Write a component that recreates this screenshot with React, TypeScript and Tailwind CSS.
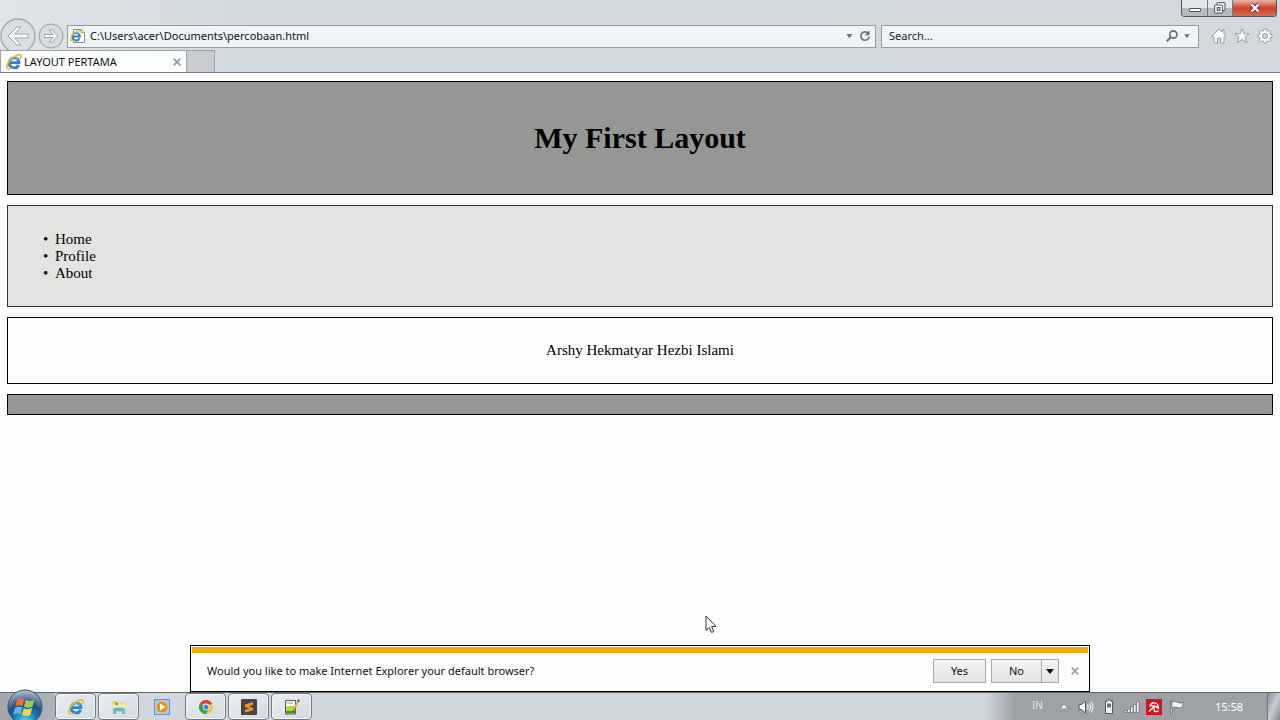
import type { ReactNode } from "react"

const menu = ["Home", "Profile", "About"]

function IeLogo({ className }: { className: string }) {
  return (
    <svg viewBox="0 0 16 16" className={className} fill="none" aria-hidden="true">
      <path d="M3.4 8.700h9.600A4.800 4.800 0 0 0 3.400 8.500 4.800 4.800 0 0 0 12.600 10.900" stroke="#2a86c9" strokeWidth="2.800" />
      <path d="M3.400 8.200A4.800 4.800 0 0 1 12 5.600" stroke="#62bdec" strokeWidth="1.400" />
      <path d="M2.600 15C-.6 14 .8 9.200 5 5.200 9 1.300 13.700-.3 14.900 1.500c.6 1 .2 2.200-.5 3.300" stroke="#edb920" strokeWidth="1.600" />
      <path d="M2.600 15c1.200.3 2.700-.3 4-1.200" stroke="#edb920" strokeWidth="1.300" />
    </svg>
  )
}

function PageIcon() {
  return (
    <span className="relative block h-4 w-4 shrink-0">
      <svg viewBox="0 0 16 16" className="h-4 w-4" aria-hidden="true">
        <path d="M3.500 1.500h8l3 3v10h-11z" fill="#fff" stroke="#8b8f96" />
        <path d="M11.500 1.500v3h3" fill="#f7dfc4" stroke="#b58f78" />
      </svg>
      <IeLogo className="absolute top-[2px] left-0 h-3 w-3" />
    </span>
  )
}

function CaretDown({ className }: { className: string }) {
  return (
    <svg viewBox="0 0 8 5" className={className} fill="currentColor" aria-hidden="true">
      <path d="M0 0h8L4 5z" />
    </svg>
  )
}

function Cross({ className }: { className: string }) {
  return (
    <svg viewBox="0 0 8 8" className={className} stroke="currentColor" strokeWidth="1.800" aria-hidden="true">
      <path d="M.7.7l6.600 6.600M7.300.7L.7 7.300" />
    </svg>
  )
}

function WindowControls() {
  return (
    <div className="flex h-[17px] overflow-hidden rounded-b border border-t-0 border-[#4f5560]">
      <button aria-label="Minimize" className="flex w-[26px] items-center justify-center border-r border-[#747a84] bg-linear-to-b from-[#e3e7ec] from-50% to-[#b5bbc4] to-50%">
        <svg viewBox="0 0 12 6" className="mt-1 h-[6px] w-3" aria-hidden="true">
          <rect x=".5" y="1.500" width="11" height="3" rx=".5" fill="#fff" stroke="#4b505a" />
        </svg>
      </button>
      <button aria-label="Restore" className="flex w-[25px] items-center justify-center border-r border-[#747a84] bg-linear-to-b from-[#e3e7ec] from-50% to-[#b5bbc4] to-50%">
        <svg viewBox="0 0 12 12" className="h-3 w-3" fill="#fff" stroke="#4b505a" aria-hidden="true">
          <rect x="3" y=".6" width="8" height="8" rx=".5" />
          <rect x=".6" y="3" width="8" height="8" rx=".5" />
          <rect x="3.200" y="5.600" width="2.800" height="2.800" fill="#c3c9d1" />
        </svg>
      </button>
      <button aria-label="Close" className="flex w-[43px] items-center justify-center bg-linear-to-b from-[#e9b3a6] from-0% via-[#c9412a] via-50% to-[#d9694d]">
        <svg viewBox="0 0 12 10" className="h-[10px] w-3" aria-hidden="true">
          <path d="M2.500 1.500l7 7M9.500 1.500l-7 7" stroke="#5e3a3a" strokeWidth="4" />
          <path d="M2.500 1.500l7 7M9.500 1.500l-7 7" stroke="#fff" strokeWidth="2.200" />
        </svg>
      </button>
    </div>
  )
}

function BrowserChrome() {
  return (
    <header className="border-b border-[#74787e] bg-linear-to-r from-[#e1e4e7] via-[#d1d8e0] via-20% to-[#d3d8de]">
      <div className="flex h-[22px] items-start justify-end pr-[3px]">
        <WindowControls />
      </div>

      <div className="flex h-7 items-center pr-[7px]">
        <button aria-label="Back" className="shrink-0">
          <svg viewBox="0 0 36 36" className="h-9 w-9" fill="none" stroke="#a3a6ab" aria-hidden="true">
            <circle cx="18" cy="18" r="17" fill="#dadde1" strokeWidth="1.300" />
            <path d="M8 18l9-9h4l-6.300 7H28v4H14.700l6.300 7h-4z" fill="#f5f6f7" strokeLinejoin="round" />
          </svg>
        </button>
        <button aria-label="Forward" className="ml-[2px] shrink-0">
          <svg viewBox="0 0 26 26" className="h-[26px] w-[26px]" fill="none" stroke="#a3a6ab" aria-hidden="true">
            <circle cx="13" cy="13" r="11.800" fill="#d8dbdf" strokeWidth="1.200" />
            <path d="M20 13l-6-6h-3l4.300 4.500H6.500v3h8.800L11 19h3z" fill="#f5f6f7" strokeLinejoin="round" />
          </svg>
        </button>

        <div className="ml-[3px] flex h-[23px] min-w-0 flex-1 items-center border border-[#979ca3] bg-[#f0f3f7] pr-1 pl-[2px]">
          <PageIcon />
          <input
            aria-label="Address"
            defaultValue="C:\Users\acer\Documents\percobaan.html"
            className="ml-1 min-w-0 flex-1 bg-transparent text-[11px] leading-4 outline-none"
          />
          <button aria-label="Show address list" className="text-[#6d7075]">
            <CaretDown className="h-1 w-[7px]" />
          </button>
          <button aria-label="Refresh" className="ml-[6px]">
            <svg viewBox="0 0 12 12" className="h-3 w-3" fill="none" stroke="#6d7075" strokeWidth="1.600" aria-hidden="true">
              <path d="M9.300 3.400A4.200 4.200 0 1 0 10.200 6.500" />
              <path d="M10.500.3v4.900H5.800z" fill="#6d7075" stroke="none" />
            </svg>
          </button>
        </div>

        <div className="ml-[5px] flex h-[23px] w-[318px] shrink-0 items-center border border-[#979ca3] bg-[#f0f3f7] pr-2 pl-[7px]">
          <input
            aria-label="Search"
            placeholder="Search..."
            className="min-w-0 flex-1 bg-transparent text-[11px] leading-4 outline-none placeholder:text-[#1b1b1b]"
          />
          <button aria-label="Go">
            <svg viewBox="0 0 12 12" className="h-3 w-3" fill="none" stroke="#6d7075" aria-hidden="true">
              <circle cx="7.400" cy="4.500" r="3.600" strokeWidth="1.700" />
              <path d="M4.800 7.200L.7 11.300" strokeWidth="2.200" />
            </svg>
          </button>
          <button aria-label="Search options" className="ml-[6px] text-[#6d7075]">
            <CaretDown className="h-1 w-[6px]" />
          </button>
        </div>

        <div className="ml-3 flex items-center gap-[7px]">
          <button aria-label="Home">
            <svg viewBox="0 0 16 16" className="h-4 w-4" fill="#f7f8f9" stroke="#9b9ea3" strokeLinejoin="round" aria-hidden="true">
              <path d="M8 1L1 8l1.200 1.300.8-.7V15h3.500v-5h3v5H13V8.600l.8.700L15 8l-2-2V2h-2v2z" />
            </svg>
          </button>
          <button aria-label="Favorites">
            <svg viewBox="0 0 16 16" className="h-4 w-4" fill="#f7f8f9" stroke="#9b9ea3" strokeLinejoin="round" aria-hidden="true">
              <path d="M8 .8l2 5h5.300L11.100 9.200l1.700 5.600L8 11.500l-4.800 3.300 1.700-5.600L.7 5.800H6z" />
            </svg>
          </button>
          <button aria-label="Tools">
            <svg viewBox="0 0 16 16" className="h-4 w-4" fill="#f7f8f9" stroke="#9b9ea3" strokeLinejoin="round" aria-hidden="true">
              <path d="M6.800 1h2.400l.4 1.900 1 .4 1.700-1.100 1.600 1.600-1.100 1.700.4 1 1.900.4v2.300l-1.900.4-.4 1 1.100 1.700-1.600 1.600-1.700-1.100-1 .4L9.200 15H6.800l-.4-1.800-1-.4-1.700 1.100-1.600-1.600 1.100-1.700-.4-1L.9 9.200V6.900l1.900-.4.4-1-1.100-1.700 1.600-1.600 1.700 1.100 1-.4z" />
              <circle cx="8" cy="8" r="2.500" fill="#d3d7dc" />
            </svg>
          </button>
        </div>
      </div>

      <div className="relative flex h-[22px]">
        <div className="flex w-[187px] items-center border border-b-0 border-[#9fa3a9] bg-[#fcfdfd] pr-[5px] pl-[5px]">
          <IeLogo className="h-4 w-4 shrink-0" />
          <span className="ml-[2px] flex-1 text-[11px] leading-4 whitespace-nowrap">LAYOUT PERTAMA</span>
          <button aria-label="Close tab" className="text-[#97999c]">
            <Cross className="h-2 w-2" />
          </button>
        </div>
        <button aria-label="New tab" className="w-7 border-t border-r border-[#9fa3a9] bg-[#c8ccd1]" />
      </div>
    </header>
  )
}

function Page() {
  return (
    <main className="flex flex-col gap-[10px] px-[7px] pt-2 font-['Liberation_Serif',serif] text-[15px] leading-[17px] text-black">
      <div className="border border-black bg-[#959794] py-[39px] text-center">
        <h1 className="text-[30px] leading-[34px] font-bold">My First Layout</h1>
      </div>
      <nav className="border border-[#333] bg-[#e2e4e1] pt-[25px] pb-6 pl-[47px]">
        <ul>
          {menu.map((item) => (
            <li key={item} className="flex items-center">
              <span className="-ml-3 w-3">•</span>
              {item}
            </li>
          ))}
        </ul>
      </nav>
      <div className="border border-black py-6 text-center">
        <p>Arshy Hekmatyar Hezbi Islami</p>
      </div>
      <div className="h-[21px] border border-black bg-[#959794]" />
    </main>
  )
}

function DefaultBrowserBar() {
  return (
    <div className="mx-auto mt-auto w-[900px] max-w-full border border-black bg-[#fcfdfc] p-[1px] pb-2">
      <div className="h-[6px] bg-[#f0ab08]" />
      <div className="mt-[6px] flex items-center pr-[9px] pl-[15px] text-[11px] leading-4">
        <p className="flex-1">Would you like to make Internet Explorer your default browser?</p>
        <button className="h-6 w-[53px] border border-[#a7a9a9] bg-linear-to-b from-[#f2f3f2] to-[#e4e6e4]">Yes</button>
        <button className="ml-[5px] h-6 w-[51px] border border-[#a7a9a9] bg-linear-to-b from-[#f2f3f2] to-[#e4e6e4]">No</button>
        <button aria-label="More choices" className="flex h-6 w-[17px] items-center justify-center border border-l-0 border-[#a7a9a9] bg-linear-to-b from-[#f2f3f2] to-[#e4e6e4]">
          <CaretDown className="h-[5px] w-2" />
        </button>
        <button aria-label="Dismiss" className="ml-3 text-[#a0a2a2]">
          <Cross className="h-2 w-2" />
        </button>
      </div>
    </div>
  )
}

function TaskButton({ label, children }: { label: string; children: ReactNode }) {
  return (
    <button aria-label={label} className="flex h-[27px] w-[41px] items-center justify-center rounded-sm border border-[#737981] bg-linear-to-br from-[#eceff3] to-[#d3d9e1] shadow-[inset_0_0_0_1px_#f3f5f8]">
      {children}
    </button>
  )
}

function Taskbar() {
  return (
    <footer className="flex h-7 items-center border-t border-[#62666c] bg-[#d0d7df]">
      <div className="flex h-full w-[55px] shrink-0 items-center bg-linear-to-r from-[#a3a6aa] to-[#aeb3b9] pl-[7px]">
        <button aria-label="Start" className="shrink-0">
          <svg viewBox="0 0 36 36" className="h-9 w-9" aria-hidden="true">
            <defs>
              <radialGradient id="orb" cx=".5" cy=".95" r=".9">
                <stop offset="0" stopColor="#4fe0fa" />
                <stop offset=".4" stopColor="#1a7ab8" />
                <stop offset=".62" stopColor="#1f4f7d" />
                <stop offset="1" stopColor="#a4b8c8" />
              </radialGradient>
            </defs>
            <circle cx="18" cy="18" r="17" fill="url(#orb)" stroke="#34526e" />
            <path d="M10 10.500c2.500-1.500 5-1.500 7.200-.2L15.600 17c-2.300-1.200-4.700-1.100-7.200.2z" fill="#ee6b31" />
            <path d="M18.600 11c2.500 1.300 5.500 1.300 8.600-.6L25.500 17.500c-2.800 1.600-5.700 1.700-8.500.2z" fill="#9fcd4a" />
            <path d="M8 18.700c2.500-1.300 4.900-1.400 7.200-.2L13.700 25c-2.300-1.200-4.700-1.100-7.200.2z" fill="#66b8ea" />
            <path d="M16.600 19.200c2.800 1.400 5.700 1.400 8.500-.1l-1.700 6.800c-2.700 1.500-5.500 1.500-8.300 0z" fill="#fbd248" />
          </svg>
        </button>
      </div>

      <div className="flex items-center gap-[2px]">
        <TaskButton label="Internet Explorer">
          <IeLogo className="h-4 w-4" />
        </TaskButton>
        <TaskButton label="Windows Explorer">
          <svg viewBox="0 0 16 16" className="h-4 w-4" aria-hidden="true">
            <path d="M1 2h5l1 1.500h7.500V12H1z" fill="#e9cf78" />
            <path d="M1.500 4.500h13V12h-13z" fill="#f6e8a9" />
            <path d="M4 4h3v2H4z" fill="#69b35c" />
            <path d="M2.500 14.500V11q0-2 2-2h7q2 0 2 2v3.500h-2.500V12H5v2.500z" fill="#70b9dd" stroke="#5498c0" strokeWidth=".5" />
          </svg>
        </TaskButton>
        <button aria-label="Media Player" className="flex w-[42px] items-center justify-center">
          <svg viewBox="0 0 16 16" className="h-4 w-4" aria-hidden="true">
            <rect x=".5" y=".5" width="15" height="15" fill="#9ccbec" stroke="#5a9ccb" />
            <circle cx="8" cy="8" r="6" fill="#f18a1c" stroke="#fbd6a2" strokeWidth=".7" />
            <path d="M6 4.500v7L11.500 8z" fill="#fff" />
          </svg>
        </button>
        <TaskButton label="Chrome">
          <svg viewBox="0 0 16 16" className="h-[14px] w-[14px]" aria-hidden="true">
            <circle cx="8" cy="8" r="8" fill="#fbcb2d" />
            <path d="M8 8L1.070 4A8 8 0 0 1 14.930 4z" fill="#dc4437" />
            <path d="M1.070 4A8 8 0 0 0 8 16l3.200-5.600L8 8z" fill="#2ba24c" />
            <circle cx="8" cy="8" r="3.900" fill="#fff" />
            <circle cx="8" cy="8" r="3" fill="#4285f4" />
          </svg>
        </TaskButton>
        <TaskButton label="Sublime Text">
          <svg viewBox="0 0 16 16" className="h-4 w-4" aria-hidden="true">
            <rect width="16" height="16" rx="1" fill="#454545" />
            <path d="M4 5.500l8-2.500v2.800L7.500 7.300 12 8.700v2.600L4 13.500v-2.700l4.500-1.400L4 8.100z" fill="#f79420" />
          </svg>
        </TaskButton>
        <TaskButton label="Notepad++">
          <svg viewBox="0 0 16 16" className="h-4 w-4" aria-hidden="true">
            <path d="M1.500 1.500h10v13.500h-10z" fill="#fff" stroke="#54575b" />
            <path d="M2 7.500q4-1.500 9 0V13H2z" fill="#a4dc3c" />
            <path d="M2 12h9v2.500H2z" fill="#4f8f2a" />
            <path d="M3 4h6M3 .5v2M6 .5v2M9 .5v2" stroke="#8a8d91" />
            <path d="M14.300 2L9.500 11" stroke="#e0a437" strokeWidth="2" />
            <path d="M15 .700l-.9 1.800" stroke="#7a2f2a" strokeWidth="2" />
            <path d="M9.500 11l-.8 1.500" stroke="#333" />
          </svg>
        </TaskButton>
      </div>

      <div className="ml-auto flex h-full items-center bg-linear-to-r from-[#d0d7df] to-[#9da1a6] to-10% pl-[46px] text-white">
        <span className="mb-1 text-[10px] leading-4 text-[#e3e6e9]">IN</span>
        <button aria-label="Show hidden icons" className="ml-[17px]">
          <svg viewBox="0 0 8 5" className="h-[5px] w-2" fill="#fff" stroke="#6c7074" strokeWidth=".5" aria-hidden="true">
            <path d="M4 .3L7.600 4.700H.4z" />
          </svg>
        </button>
        <svg viewBox="0 0 16 16" className="ml-[10px] h-4 w-4" fill="none" stroke="#fff" aria-hidden="true">
          <path d="M1 5.500h2.500L7.500 2v12l-4-3.500H1z" fill="#f4f5f6" stroke="#55595e" />
          <path d="M9.500 5.500q1.500 2.500 0 5M11.500 4q2.500 4 0 8M13.300 2.500q3.200 5.500 0 11" />
        </svg>
        <svg viewBox="0 0 12 16" className="ml-[9px] h-4 w-3" aria-hidden="true">
          <path d="M4 2.500V1h4v1.500h1.500v12h-7v-12z" fill="#f5f6f7" stroke="#55595e" />
          <rect x="4" y="4.500" width="4" height="4" fill="#6c7176" />
        </svg>
        <svg viewBox="0 0 16 14" className="ml-[9px] h-[14px] w-4" fill="#f5f6f7" stroke="#666a6f" strokeWidth=".7" aria-hidden="true">
          <path d="M.5 10.500h2.500v2H.5zM3.500 9H6v3.500H3.500zM6.500 7H9v5.500H6.500zM9.500 4.500H12v8H9.500zM12.500 1.500H15v11h-2.500z" />
        </svg>
        <svg viewBox="0 0 16 16" className="ml-[6px] h-4 w-4" fill="none" stroke="#fff" aria-hidden="true">
          <rect width="16" height="16" fill="#d5141c" stroke="none" />
          <path d="M4 7Q5 3.500 8.500 3.800 12.600 4.500 12.500 9.500 10.500 7 8 7.300 6 6.300 4 7z" strokeWidth="1.300" strokeLinejoin="round" />
          <path d="M8 7.500l-5 5M8.500 8.500q-1 3.500.8 4t3.200-1" strokeWidth="1.300" />
        </svg>
        <svg viewBox="0 0 16 16" className="ml-[7px] h-4 w-4" fill="#f5f6f7" stroke="#5b5f64" strokeWidth=".7" aria-hidden="true">
          <path d="M1.500 2H3v13H1.500z" />
          <path d="M3 3q3-1 5.500.5 2.500 1.200 6 .2-.5 2.500-2 5-2.500.6-4.500-.4Q5.500 7.500 3 9z" />
        </svg>
        <time className="ml-[30px] text-[11px] leading-4">15:58</time>
        <button aria-label="Show desktop" className="ml-6 h-full w-[13px] border-l border-[#6f747a] bg-linear-to-br from-[#8b9097] via-[#c8ccd2] to-[#858a91]" />
      </div>
    </footer>
  )
}

export default function App() {
  return (
    <div className="flex min-h-screen flex-col overflow-hidden bg-[#fcfdfc] font-['Noto_Sans',sans-serif] text-[#111]">
      <BrowserChrome />
      <Page />
      <DefaultBrowserBar />
      <Taskbar />

      {/* Mouse pointer */}
      <svg viewBox="0 0 12 19" className="pointer-events-none absolute top-[615px] left-[705px] h-[19px] w-3" aria-hidden="true">
        <path d="M1 1v14.500l3.300-3.200 2.200 5.200 2.300-1-2.200-5H11z" fill="#fff" stroke="#333" />
      </svg>
    </div>
  )
}
